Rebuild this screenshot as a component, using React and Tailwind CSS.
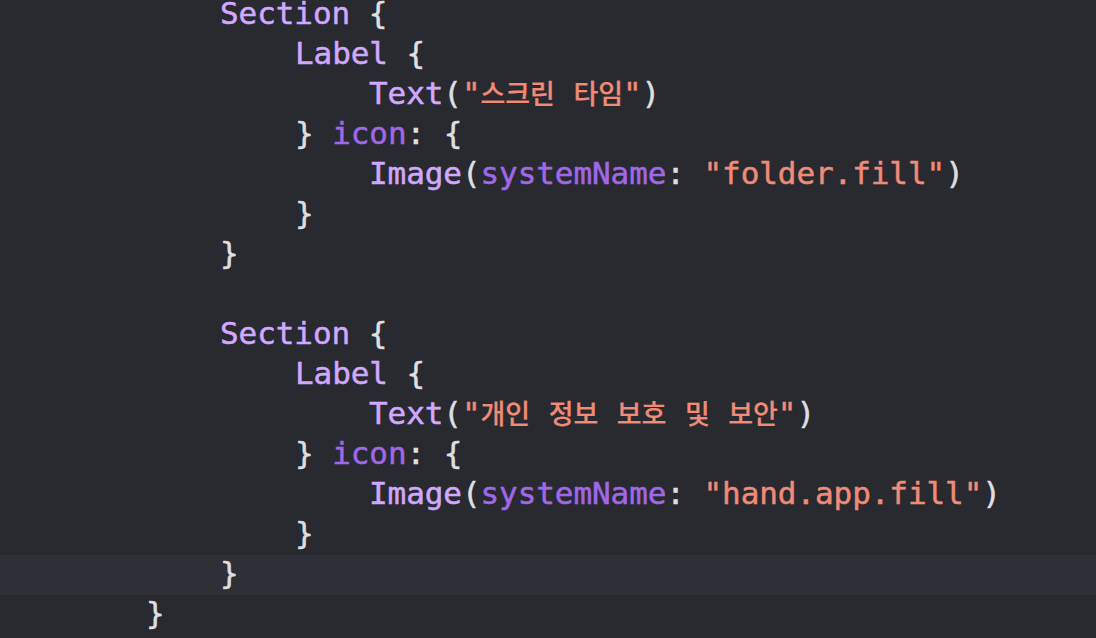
import React from "react";

const P = "text-[#dfdfe0]";
const K = "text-[#d0a8ff]";
const M = "text-[#a167e6]";
const S = "text-[#ef8b76]";

const IND = {
  8: "pl-[146px]",
  12: "pl-[220px]",
  16: "pl-[295px]",
  20: "pl-[369px]",
};

function Ko({ children }) {
  return (
    <span className="text-[27px] font-medium [-webkit-text-stroke:0.2px]" style={{ fontFamily: '"Noto Sans CJK KR", sans-serif' }}>
      {children}
    </span>
  );
}

const lines = [
  [12, [K, "Section"], [P, " {"]],
  [16, [K, "Label"], [P, " {"]],
  [20, [K, "Text"], [P, "("], [S, '"', ["스크린", " ", "타임"], '"'], [P, ")"]],
  [16, [P, "} "], [M, "icon"], [P, ": {"]],
  [20, [K, "Image"], [P, "("], [M, "systemName"], [P, ": "], [S, '"folder.fill"'], [P, ")"]],
  [16, [P, "}"]],
  [12, [P, "}"]],
  [12],
  [12, [K, "Section"], [P, " {"]],
  [16, [K, "Label"], [P, " {"]],
  [20, [K, "Text"], [P, "("], [S, '"', ["개인", " ", "정보", " ", "보호", " ", "및", " ", "보안"], '"'], [P, ")"]],
  [16, [P, "} "], [M, "icon"], [P, ": {"]],
  [20, [K, "Image"], [P, "("], [M, "systemName"], [P, ": "], [S, '"hand.app.fill"'], [P, ")"]],
  [16, [P, "}"]],
  [12, [P, "}"]],
  [8, [P, "}"]],
];

function Seg({ seg }) {
  const [cls, ...parts] = seg;
  return (
    <span className={cls}>
      {parts.map((p, i) =>
        Array.isArray(p) ? (
          p.map((w, j) => (w === " " ? <span key={j}> </span> : <Ko key={j}>{w}</Ko>))
        ) : (
          <React.Fragment key={i}>{p}</React.Fragment>
        )
      )}
    </span>
  );
}

export default function App() {
  return (
    <div
      className="w-[1096px] h-[638px] overflow-hidden bg-[#292a30] text-[31px] tracking-[-0.08px] [-webkit-text-stroke:0.5px]"
      style={{ fontFamily: '"DejaVu Sans Mono", monospace' }}
    >
      <div className="-mt-[5px] flex flex-col">
        {lines.map(([ind, ...segs], i) => (
          <div
            key={i}
            className={`h-[40px] leading-[36px] whitespace-pre ${IND[ind]} ${i === 14 ? "bg-[#2f3037]" : ""}`}
          >
            {segs.map((seg, j) => (
              <Seg key={j} seg={seg} />
            ))}
          </div>
        ))}
      </div>
    </div>
  );
}
